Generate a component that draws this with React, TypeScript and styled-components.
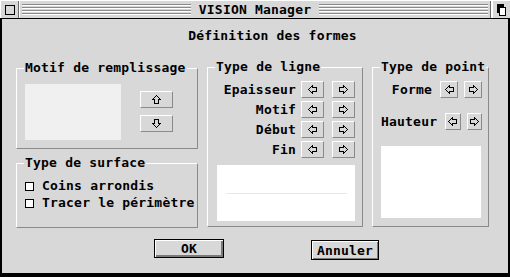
import React from "react";
import styled, { createGlobalStyle } from "styled-components";

const GlobalStyle = createGlobalStyle`
  html, body {
    margin: 0;
    padding: 0;
    background: #d8d8d8;
  }
  * {
    box-sizing: border-box;
  }
`;

const FONT = `"DejaVu Sans Mono", "Liberation Mono", monospace`;

const Window = styled.div`
  width: 510px;
  height: 277px;
  display: flex;
  flex-direction: column;
  background: #d8d8d8;
  font-family: ${FONT};
  font-weight: bold;
  font-size: 13px;
  letter-spacing: 0.2px;
  color: #000;
  overflow: hidden;
`;

const TitleBar = styled.div`
  height: 19px;
  display: flex;
  align-items: stretch;
  border-bottom: 1px solid #000;
  border-top: 1px solid #fff;
  background: #d8d8d8;
`;

const BoxCell = styled.div`
  width: 18px;
  display: flex;
  align-items: center;
  justify-content: center;
  border-left: 1px solid #fff;
`;

const CloseBox = styled.div`
  width: 10px;
  height: 10px;
  border: 1px solid #000;
`;

const Divider = styled.div`
  width: 2px;
  border-left: 1px solid #6a6a6a;
  border-right: 1px solid #fff;
`;

const Stripes = styled.div`
  flex: 1;
  margin: 3px 2px 3px 2px;
  background: repeating-linear-gradient(
    to bottom,
    #8a8a8a 0px,
    #8a8a8a 1px,
    #ffffff 1px,
    #ffffff 2px,
    #d8d8d8 2px,
    #d8d8d8 3px
  );
`;

const Title = styled.div`
  padding: 0 6px;
  line-height: 17px;
  white-space: pre;
`;

const Body = styled.div`
  flex: 1;
  display: flex;
  flex-direction: column;
  border-left: 2px solid #000;
  border-right: 2px solid #000;
  border-bottom: 4px solid #000;
`;

const Heading = styled.div`
  margin-top: 9px;
  padding-left: 35px;
  line-height: 16px;
  text-align: center;
`;

const Columns = styled.div`
  margin-top: 16px;
  padding-left: 14px;
  display: grid;
  grid-template-columns: 182px 156px 117px;
  column-gap: 9px;
`;

const LeftColumn = styled.div`
  display: flex;
  flex-direction: column;
  gap: 7px;
`;

const Group = styled.fieldset<{ $h: number; $top?: number }>`
  margin: ${(p) => p.$top ?? 0}px 0 0 0;
  padding: 0;
  min-width: 0;
  height: ${(p) => p.$h}px;
  border: 1px solid;
  border-color: #ffffff #8a8a8a #8a8a8a #ffffff;
`;

const Legend = styled.legend`
  margin-left: 7px;
  padding: 0 1px;
  line-height: 14px;
`;

const MotifBody = styled.div`
  display: flex;
  padding: 9px 0 0 8px;
  gap: 19px;
`;

const Preview = styled.div`
  width: 96px;
  height: 56px;
  background: #f0f0f0;
`;

const UpDown = styled.div`
  display: flex;
  flex-direction: column;
  gap: 7px;
  padding-top: 7px;
`;

const ArrowButton = styled.button<{ $w: number }>`
  width: ${(p) => p.$w}px;
  height: 17px;
  padding: 0;
  margin: 0;
  display: flex;
  align-items: center;
  justify-content: center;
  background: #d8d8d8;
  border: 1px solid;
  border-color: #ffffff #8a8a8a #8a8a8a #ffffff;
  border-radius: 0;
`;

const SurfaceBody = styled.div`
  display: flex;
  flex-direction: column;
  padding: 8px 0 0 8px;
  gap: 1px;
`;

const CheckRow = styled.label`
  display: flex;
  align-items: center;
  gap: 8px;
  line-height: 16px;
  white-space: pre;
`;

const CheckBox = styled.span`
  width: 9px;
  height: 9px;
  border: 1px solid #000;
  background: #fff;
`;

const RowsBody = styled.div<{ $pr: number; $pl: number }>`
  display: flex;
  flex-direction: column;
  padding: 7px ${(p) => p.$pr}px 0 ${(p) => p.$pl}px;
`;

const ControlRow = styled.div<{ $gap: number; $mb: number }>`
  display: flex;
  justify-content: flex-end;
  align-items: center;
  gap: ${(p) => p.$gap}px;
  margin-bottom: ${(p) => p.$mb}px;
`;

const RowLabel = styled.span<{ $mr: number }>`
  margin-right: ${(p) => p.$mr}px;
  line-height: 17px;
`;

const WhiteBox = styled.div<{ $w?: number; $h: number }>`
  width: ${(p) => (p.$w ? `${p.$w}px` : "auto")};
  height: ${(p) => p.$h}px;
  background: #fff;
  display: flex;
  align-items: center;
  justify-content: center;
`;

const SampleLine = styled.div`
  width: 121px;
  height: 1px;
  background: #e8e8e8;
`;

const ButtonRow = styled.div`
  display: flex;
  align-items: flex-start;
  padding-left: 152px;
  margin-top: 11px;
`;

const DialogButton = styled.button<{ $w: number; $default?: boolean }>`
  width: ${(p) => p.$w}px;
  height: ${(p) => (p.$default ? 19 : 20)}px;
  margin: ${(p) => (p.$default ? "0 87px 0 0" : "1px 0 0 0")};
  padding: 0;
  font-family: ${FONT};
  font-weight: bold;
  font-size: 13px;
  letter-spacing: 0.2px;
  color: #000;
  background: #d8d8d8;
  border: 1px solid #000;
  border-radius: 0;
  box-shadow: inset 1px 1px 0 #ffffff,
    inset ${(p) => (p.$default ? "-2px -2px" : "-1px -1px")} 0 #7a7a7a;
`;

type Dir = "left" | "right" | "up" | "down";
const rotation: Record<Dir, number> = { left: 0, up: 90, right: 180, down: 270 };

const Arrow = ({ dir }: { dir: Dir }) => (
  <svg width="9" height="9" viewBox="0 0 9 9" shapeRendering="crispEdges">
    <g transform={`rotate(${rotation[dir]} 4.5 4.5)`}>
      <polygon
        points="0.5,4.5 4.5,0.5 4.5,2.5 8.5,2.5 8.5,6.5 4.5,6.5 4.5,8.5"
        fill="none"
        stroke="#000"
        strokeWidth="1"
      />
    </g>
  </svg>
);

const ZoomIcon = () => (
  <svg width="10" height="12" viewBox="0 0 10 12" shapeRendering="crispEdges">
    <rect x="0" y="0" width="7" height="9" fill="#000" />
    <rect x="2.5" y="3.5" width="6" height="8" fill="#fff" stroke="#000" />
  </svg>
);

const lineRows = ["Epaisseur", "Motif", "Début", "Fin"];

export default function App() {
  return (
    <>
      <GlobalStyle />
      <Window>
        <TitleBar>
          <BoxCell>
            <CloseBox />
          </BoxCell>
          <Divider />
          <Stripes />
          <Title>VISION Manager</Title>
          <Stripes />
          <Divider />
          <BoxCell>
            <ZoomIcon />
          </BoxCell>
        </TitleBar>
        <Body>
          <Heading>Définition des formes</Heading>
          <Columns>
            <LeftColumn>
              <Group $h={88} $top={1}>
                <Legend>Motif de remplissage</Legend>
                <MotifBody>
                  <Preview />
                  <UpDown>
                    <ArrowButton $w={33}>
                      <Arrow dir="up" />
                    </ArrowButton>
                    <ArrowButton $w={33}>
                      <Arrow dir="down" />
                    </ArrowButton>
                  </UpDown>
                </MotifBody>
              </Group>
              <Group $h={72}>
                <Legend>Type de surface</Legend>
                <SurfaceBody>
                  <CheckRow>
                    <CheckBox />
                    Coins arrondis
                  </CheckRow>
                  <CheckRow>
                    <CheckBox />
                    Tracer le périmètre
                  </CheckRow>
                </SurfaceBody>
              </Group>
            </LeftColumn>

            <Group $h={167}>
              <Legend>Type de ligne</Legend>
              <RowsBody $pl={9} $pr={7}>
                {lineRows.map((label, i) => (
                  <ControlRow key={label} $gap={8} $mb={i === lineRows.length - 1 ? 7 : 3}>
                    <RowLabel $mr={-3}>{label}</RowLabel>
                    <ArrowButton $w={23}>
                      <Arrow dir="left" />
                    </ArrowButton>
                    <ArrowButton $w={23}>
                      <Arrow dir="right" />
                    </ArrowButton>
                  </ControlRow>
                ))}
                <WhiteBox $h={56}>
                  <SampleLine />
                </WhiteBox>
              </RowsBody>
            </Group>

            <Group $h={167}>
              <Legend>Type de point</Legend>
              <RowsBody $pl={8} $pr={6}>
                <ControlRow $gap={6} $mb={15}>
                  <RowLabel $mr={2}>Forme</RowLabel>
                  <ArrowButton $w={18}>
                    <Arrow dir="left" />
                  </ArrowButton>
                  <ArrowButton $w={18}>
                    <Arrow dir="right" />
                  </ArrowButton>
                </ControlRow>
                <ControlRow $gap={6} $mb={16}>
                  <RowLabel $mr={2}>Hauteur</RowLabel>
                  <ArrowButton $w={18}>
                    <Arrow dir="left" />
                  </ArrowButton>
                  <ArrowButton $w={18}>
                    <Arrow dir="right" />
                  </ArrowButton>
                </ControlRow>
                <WhiteBox $w={100} $h={72} />
              </RowsBody>
            </Group>
          </Columns>
          <ButtonRow>
            <DialogButton $w={70} $default>
              OK
            </DialogButton>
            <DialogButton $w={68}>Annuler</DialogButton>
          </ButtonRow>
        </Body>
      </Window>
    </>
  );
}
